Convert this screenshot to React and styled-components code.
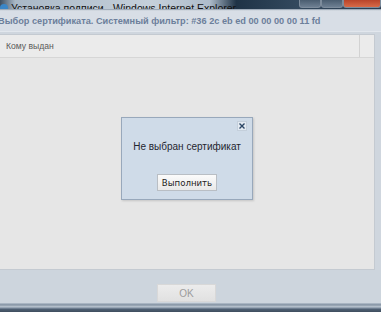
import React from "react";
import styled, { createGlobalStyle } from "styled-components";

const GlobalStyle = createGlobalStyle`
  html, body {
    margin: 0;
    padding: 0;
    width: 381px;
    height: 312px;
    overflow: hidden;
    background: #cdd5dd;
  }
  #root {
    height: 100%;
  }
`;

const Window = styled.div`
  position: relative;
  width: 381px;
  height: 312px;
  display: flex;
  flex-direction: column;
  font-family: "Liberation Sans", Arial, sans-serif;
  overflow: hidden;
`;

const TitleBar = styled.div`
  height: 9px;
  flex: none;
  display: flex;
  align-items: flex-end;
  overflow: hidden;
  background: linear-gradient(90deg, #3d4f63 0%, #a9b8c6 4%, #c5d0da 40%, #aebccb 55%, #1f3346 62%, #33495e 78%, #2a3c50 100%);
`;

const TitleIcon = styled.div`
  width: 8px;
  height: 8px;
  margin: 0 3px -3px 0;
  border-radius: 50%;
  background: #3a86c8;
  flex: none;
`;

const TitleText = styled.span`
  font-size: 10.5px;
  line-height: 12px;
  margin-bottom: -5px;
  color: #111;
  white-space: nowrap;
`;

const Controls = styled.div`
  margin-left: auto;
  display: flex;
  height: 100%;
`;

const CtrlButton = styled.div`
  width: ${(p) => p.$w}px;
  height: 8px;
  border: 1px solid #7d8c9c;
  border-top: none;
  border-radius: 0 0 3px 3px;
  background: ${(p) => p.$bg};
  box-sizing: border-box;
`;

const FrameLine = styled.div`
  height: 2px;
  flex: none;
  background: linear-gradient(#8796a6, #e6ebf0);
`;

const HeaderStrip = styled.div`
  height: 20px;
  flex: none;
  display: flex;
  align-items: center;
  background: #d8dee6;
  border-bottom: 1px solid #e2e7ed;
  margin-left: -2px;
`;

const HeaderText = styled.span`
  font-weight: bold;
  font-size: 9.2px;
  color: #6c7f9b;
  white-space: nowrap;
`;

const Body = styled.div`
  flex: 1;
  display: flex;
  flex-direction: column;
  padding: 2px 6px 0 0;
  background: #cfd6de;
`;

const TablePanel = styled.div`
  flex: 1;
  display: flex;
  flex-direction: column;
  border: 1px solid #c4cad1;
  border-left: none;
  background: #e6e6e6;
`;

const TableHead = styled.div`
  height: 22px;
  display: flex;
  align-items: stretch;
  background: #ebebeb;
  border-bottom: 1px solid #d6d6d6;
`;

const HeadCell = styled.div`
  display: flex;
  align-items: center;
  flex: ${(p) => (p.$grow ? 1 : "none")};
  width: ${(p) => (p.$w ? `${p.$w}px` : "auto")};
  padding-left: ${(p) => p.$pad || 0}px;
  border-right: ${(p) => (p.$sep ? "1px solid #d2d2d2" : "none")};
  font-size: 8.6px;
  color: #5a5a5a;
`;

const TableBody = styled.div`
  flex: 1;
  background: #e6e6e6;
`;

const Footer = styled.div`
  height: 32px;
  flex: none;
  display: flex;
  justify-content: center;
  align-items: flex-end;
  padding-bottom: 1px;
  padding-right: 8px;
  background: #cdd5dd;
`;

const OkButton = styled.div`
  width: 59px;
  height: 18px;
  display: flex;
  align-items: center;
  justify-content: center;
  background: linear-gradient(#ececec, #e1e1e1);
  border: 1px solid #d8d8d8;
  font-size: 10px;
  color: #9c9c9c;
  box-sizing: border-box;
`;

const BottomFrame = styled.div`
  height: 9px;
  flex: none;
  background: linear-gradient(#a9b5c2 0px, #a9b5c2 1px, #6f8092 2px, #c0cad4 3px, #8b9aab 5px, #4f6073 6px, #3f4e5f 9px);
`;

const Dialog = styled.div`
  position: absolute;
  left: 121px;
  top: 117px;
  width: 132px;
  height: 83px;
  box-sizing: border-box;
  background: #cfdbe8;
  border: 1px solid #98a8bb;
  box-shadow: 1px 1px 2px rgba(0, 0, 0, 0.15);
  display: flex;
  flex-direction: column;
  align-items: center;
`;

const DialogTop = styled.div`
  align-self: stretch;
  display: flex;
  justify-content: flex-end;
  padding: 3px 5px 0 0;
`;

const CloseBox = styled.div`
  width: 10px;
  height: 10px;
  background: #e3eaf2;
  border: 1px solid #c4cfdb;
  box-sizing: border-box;
  display: flex;
  align-items: center;
  justify-content: center;
`;

const Message = styled.div`
  margin-top: 10px;
  font-size: 10px;
  color: #1f2630;
  white-space: nowrap;
`;

const RunButton = styled.div`
  margin-top: 22px;
  width: 60px;
  height: 17px;
  box-sizing: border-box;
  display: flex;
  align-items: center;
  justify-content: center;
  background: linear-gradient(#fbfbfb, #e9e9e9);
  border: 1px solid #b9bec4;
  font-family: "DejaVu Sans", Verdana, sans-serif;
  font-size: 8.6px;
  color: #222;
`;

export default function App() {
  return (
    <>
      <GlobalStyle />
      <Window>
        <TitleBar>
          <TitleIcon />
          <TitleText>Установка подписи - Windows Internet Explorer</TitleText>
          <Controls>
            <CtrlButton $w={22} $bg="linear-gradient(#4a5d70, #6d7f92)" />
            <CtrlButton $w={22} $bg="linear-gradient(#4a5d70, #6d7f92)" />
            <CtrlButton $w={38} $bg="linear-gradient(#b8442a, #d86a48)" />
          </Controls>
        </TitleBar>
        <FrameLine />
        <HeaderStrip>
          <HeaderText>Выбор сертификата. Системный фильтр: #36 2c eb ed 00 00 00 00 11 fd</HeaderText>
        </HeaderStrip>
        <Body>
          <TablePanel>
            <TableHead>
              <HeadCell $grow $sep $pad={6}>Кому выдан</HeadCell>
              <HeadCell $w={14} />
            </TableHead>
            <TableBody />
          </TablePanel>
        </Body>
        <Footer>
          <OkButton>OK</OkButton>
        </Footer>
        <BottomFrame />

        <Dialog>
          <DialogTop>
            <CloseBox>
              <svg width="6" height="6" viewBox="0 0 6 6">
                <path d="M0.5 0.5 L5.5 5.5 M5.5 0.5 L0.5 5.5" stroke="#2c4766" strokeWidth="1.4" />
              </svg>
            </CloseBox>
          </DialogTop>
          <Message>Не выбран сертификат</Message>
          <RunButton>Выполнить</RunButton>
        </Dialog>
      </Window>
    </>
  );
}
